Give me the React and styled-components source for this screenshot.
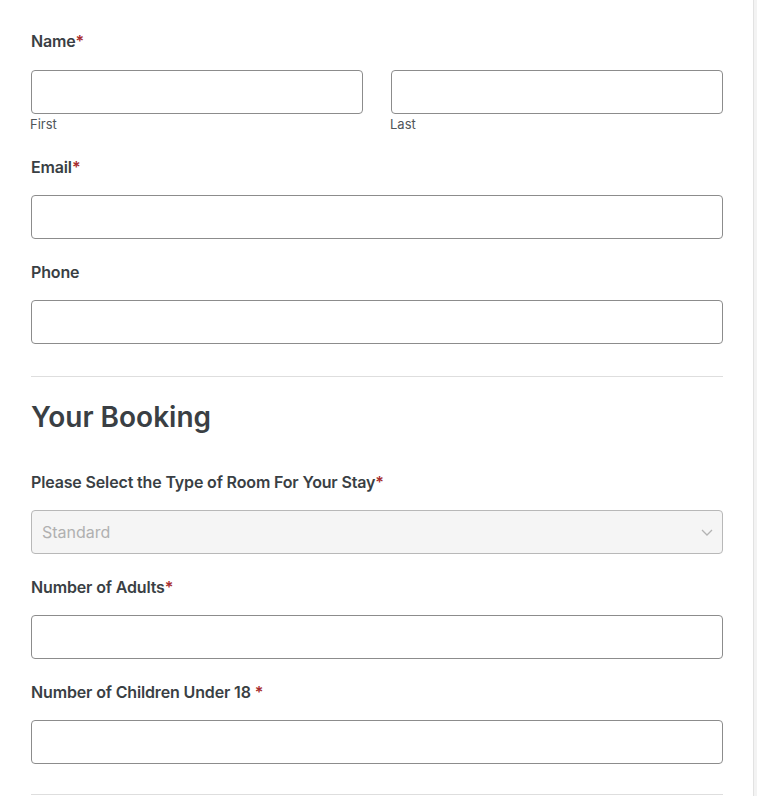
import React from 'react'
import styled, { createGlobalStyle } from 'styled-components'

const GlobalStyle = createGlobalStyle`
  * {
    box-sizing: border-box;
  }
  body {
    margin: 0;
    background: #f3f3f3;
    font-family: Inter, "Noto Sans", "Liberation Sans", sans-serif;
  }
`;

const BookingForm = () => {
  return (
    <>
      <GlobalStyle />
      <Panel>
        <Form onSubmit={(e) => e.preventDefault()}>
          <Field>
            <Label>Name<Required>*</Required></Label>
            <NameRow>
              <div>
                <Input type='text' name='first' />
                <SubLabel>First</SubLabel>
              </div>
              <div>
                <Input type='text' name='last' />
                <SubLabel>Last</SubLabel>
              </div>
            </NameRow>
          </Field>

          <Field>
            <Label>Email<Required>*</Required></Label>
            <Input type='email' name='email' />
          </Field>

          <Field>
            <Label>Phone</Label>
            <Input type='tel' name='phone' />
          </Field>

          <Divider />

          <Heading>Your Booking</Heading>

          <Field>
            <Label>Please Select the Type of Room For Your Stay<Required>*</Required></Label>
            <SelectBox>
              <Select defaultValue='' name='room'>
                <option value='' disabled>Standard</option>
                <option value='standard'>Standard</option>
                <option value='deluxe'>Deluxe</option>
                <option value='suite'>Suite</option>
              </Select>
              <Chevron width='12' height='7' viewBox='0 0 12 7'>
                <path d='M1 1l5 5 5-5' fill='none' stroke='#b3b3b3' strokeWidth='1.3' />
              </Chevron>
            </SelectBox>
          </Field>

          <Field>
            <Label>Number of Adults<Required>*</Required></Label>
            <Input type='text' name='adults' />
          </Field>

          <Field>
            <Label>Number of Children Under 18 <Required>*</Required></Label>
            <Input type='text' name='children' />
          </Field>

          <Divider $top={7} />
        </Form>
      </Panel>
    </>
  )
}

export default BookingForm

const Panel = styled.div`
  width: 754px;
  min-height: 100vh;
  background: #fff;
  border-right: 1px solid #e2e2e2;
  padding: 31px 30px 0 31px;
`;

const Form = styled.form`
  display: flex;
  flex-direction: column;
  gap: 23px;
`;

const Field = styled.div`
  display: flex;
  flex-direction: column;
`;

const Label = styled.label`
  font-size: 16px;
  line-height: 20px;
  font-weight: 600;
  letter-spacing: -0.15px;
  color: #3a3f44;
  margin-bottom: 18px;
`;

const Required = styled.span`
  color: #a72d2d;
`;

const NameRow = styled.div`
  display: grid;
  grid-template-columns: 1fr 1fr;
  gap: 28px;
  margin-top: 1px;
`;

const SubLabel = styled.div`
  font-size: 13px;
  line-height: 18px;
  color: #50555a;
  margin: 1px 0 1px -1px;
`;

const Input = styled.input`
  display: block;
  width: 100%;
  height: 44px;
  border: 1px solid #8c8c8c;
  border-radius: 4px;
  background: #fff;
  padding: 0 10px;
  font-family: inherit;
  font-size: 16px;
  outline: none;
  &:focus {
    border-color: #555;
  }
`;

const Divider = styled.hr`
  width: 100%;
  margin: ${(p) => p.$top ?? 9}px 0 0;
  border: none;
  border-top: 1px solid #dedede;
`;

const Heading = styled.h2`
  margin: 1px 0 14px;
  font-size: 28px;
  line-height: 1.2;
  font-weight: 600;
  color: #3a3f44;
`;

const SelectBox = styled.div`
  position: relative;
`;

const Select = styled.select`
  display: block;
  width: 100%;
  height: 44px;
  appearance: none;
  border: 1px solid #b8b8b8;
  border-radius: 4px;
  background: #f5f5f5;
  padding: 0 30px 0 10px;
  font-family: inherit;
  font-size: 16px;
  color: #b0b0b0;
  outline: none;
`;

const Chevron = styled.svg`
  position: absolute;
  right: 10px;
  top: 19px;
  pointer-events: none;
`;
